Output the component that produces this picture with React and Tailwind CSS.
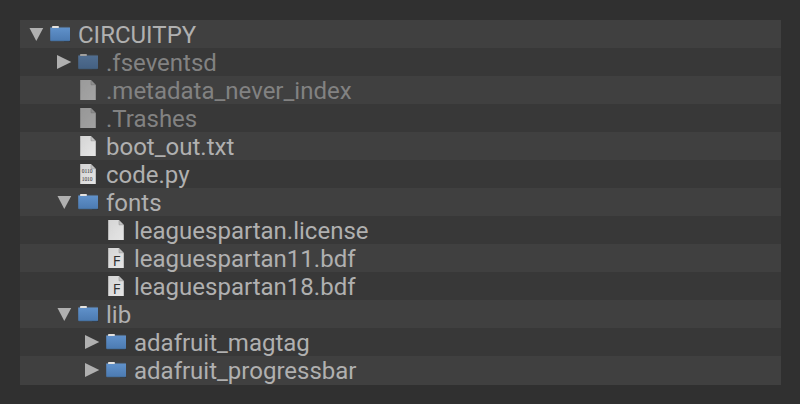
import React from "react";

const ROWS = [
  { name: "CIRCUITPY", kind: "folder", depth: 0, arrow: "down" },
  { name: ".fseventsd", kind: "folder", depth: 1, arrow: "right", hidden: true },
  { name: ".metadata_never_index", kind: "file", depth: 1, hidden: true },
  { name: ".Trashes", kind: "file", depth: 1, hidden: true },
  { name: "boot_out.txt", kind: "file", depth: 1 },
  { name: "code.py", kind: "code", depth: 1 },
  { name: "fonts", kind: "folder", depth: 1, arrow: "down" },
  { name: "leaguespartan.license", kind: "file", depth: 2 },
  { name: "leaguespartan11.bdf", kind: "font", depth: 2 },
  { name: "leaguespartan18.bdf", kind: "font", depth: 2 },
  { name: "lib", kind: "folder", depth: 1, arrow: "down" },
  { name: "adafruit_magtag", kind: "folder", depth: 2, arrow: "right" },
  { name: "adafruit_progressbar", kind: "folder", depth: 2, arrow: "right" },
];

const INDENT = ["pl-2", "pl-9", "pl-16"];

function Arrow({ direction }) {
  return (
    <svg className="h-7 w-[22px] shrink-0" viewBox="0 0 22 28">
      {direction === "down" && <path d="M1.5 8H15.2L8.3 21Z" fill="#b0b0b0" />}
      {direction === "right" && <path d="M1 7V21L15.3 14Z" fill="#b0b0b0" />}
    </svg>
  );
}

function Folder() {
  return (
    <g>
      <path d="M14 21H20.3V21.8H14Z" fill="#303236" />
      <rect x="0.2" y="7.2" width="19.8" height="13.9" rx="0.8" fill="url(#folderBlue)" />
      <path d="M0.6 7.3H19.4" stroke="#54687f" strokeWidth="0.8" />
      <path d="M2.1 7.9V6.5Q2.1 6 2.6 6H8.3Q8.8 6 8.8 6.5V7.9Z" fill="#e6e4e1" />
      <path d="M0.8 20.9H19.4" stroke="#41668f" strokeWidth="0.6" />
    </g>
  );
}

function Page({ kind }) {
  return (
    <g>
      <path d="M2 3.8H12.9L18 8.9V24.1H2Z" fill="#2c2c2c" opacity="0.4" />
      <path d="M2.2 4H12.8L17.8 9V23.9H2.2Z" fill="url(#pageGrey)" />
      <path d="M13 4.2V8.8H17.6Z" fill="#c2c2c2" />
      <path d="M13 4.6V8.8H17.3" fill="none" stroke="#8e8e8e" strokeWidth="0.5" />
      {kind === "font" && (
        <text x="6.7" y="22" fontSize="14.8" fill="#303030" className="font-['Open_Sans',sans-serif]">F</text>
      )}
      {kind === "code" && (
        <g fontSize="5.5" fill="#2c2c2c" className="font-['Liberation_Serif',serif]">
          <text x="3.8" y="12.9" textLength="10.6">0110</text>
          <text x="3.8" y="20.9" textLength="10.6">1010</text>
        </g>
      )}
    </g>
  );
}

function Row({ row, striped, last }) {
  return (
    <li
      className={`flex items-start ${INDENT[row.depth]} ${last ? "h-[29px]" : "h-7"} ${striped ? "bg-[#404040]" : "bg-[#383838]"}`}
    >
      <Arrow direction={row.arrow} />
      <svg className={`h-7 w-[22px] shrink-0 ${row.hidden ? "opacity-60" : "opacity-99"}`} viewBox="0 0 22 28">
        {row.kind === "folder" ? <Folder /> : <Page kind={row.kind} />}
      </svg>
      <span
        className={`h-7 pl-1.5 text-2xl leading-[31px] whitespace-pre ${row.hidden ? "text-[#828282]" : "text-[#b0b0b0]"}`}
      >
        {row.name}
      </span>
    </li>
  );
}

export default function App() {
  return (
    <main className="h-[404px] w-[800px] overflow-hidden bg-[#303030] py-5 pr-[19px] pl-5 font-['Roboto',sans-serif]">
      <svg className="absolute size-0" aria-hidden="true">
        <defs>
          <linearGradient id="folderBlue" x1="0" y1="0" x2="0" y2="1">
            <stop offset="0" stopColor="#6293cd" />
            <stop offset="1" stopColor="#4c7bb3" />
          </linearGradient>
          <linearGradient id="pageGrey" x1="0" y1="0" x2="1" y2="1">
            <stop offset="0" stopColor="#d6d6d6" />
            <stop offset="1" stopColor="#e8e8e8" />
          </linearGradient>
        </defs>
      </svg>
      <ul>
        {ROWS.map((row, i) => (
          <Row key={row.name} row={row} striped={i % 2 === 0} last={i === ROWS.length - 1} />
        ))}
      </ul>
    </main>
  );
}
